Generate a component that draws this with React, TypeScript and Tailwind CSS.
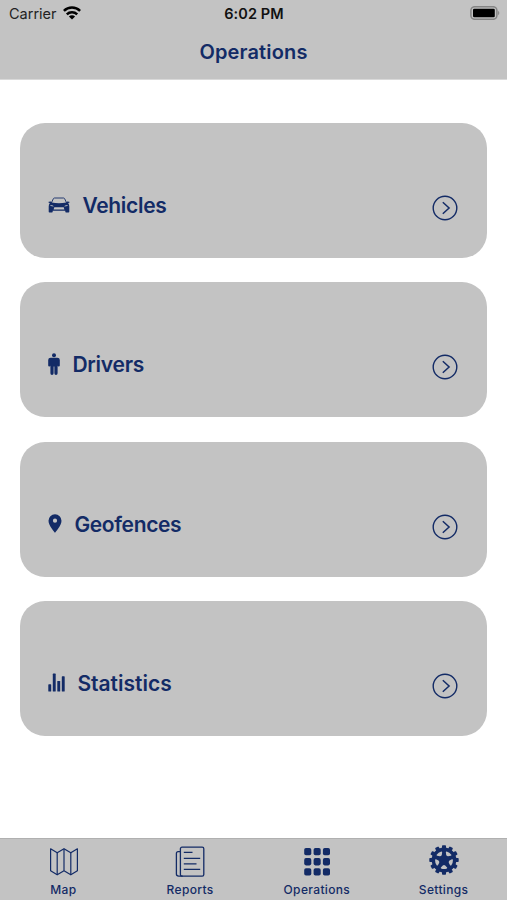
import React from 'react';

interface IconProps {
  className?: string;
}

const WifiIcon: React.FC<IconProps> = ({ className }) => (
  <svg className={className} viewBox="0 0 18 14" fill="none" stroke="currentColor" strokeWidth="2.5">
    <path d="M0.9 4.9a11.6 11.6 0 0 1 16.2 0" />
    <path d="M3.8 8.4a7.4 7.4 0 0 1 10.4 0" />
    <path d="M9 13.6 5.9 10.5a4.4 4.4 0 0 1 6.2 0z" fill="currentColor" stroke="none" />
  </svg>
);

const BatteryIcon: React.FC<IconProps> = ({ className }) => (
  <svg className={className} viewBox="0 0 30 14">
    <rect x="0.9" y="0.7" width="26" height="12.6" rx="3.8" fill="none" stroke="#858585" strokeWidth="1.5" />
    <rect x="3" y="2.7" width="21.8" height="8.6" rx="1.3" fill="#000" />
    <path d="M28.1 4.8a2.6 2.6 0 0 1 0 4.4z" fill="#858585" />
  </svg>
);

const CarIcon: React.FC<IconProps> = ({ className }) => (
  <svg className={className} viewBox="0 0 22 16">
    <path d="M3.2 6.4 5.3 1.8Q5.6 1.1 6.4 1h9.2q0.8 0.1 1.1 0.8l2.1 4.6" fill="none" stroke="currentColor" strokeWidth="0.9" />
    <path
      fillRule="evenodd"
      fill="currentColor"
      d="M0.6 4.7 3 4.4l0.6 1.1q7.4 1.3 14.8 0L19 4.4l2.4 0.3v1.1l-1.3 0.3q1.2 1.2 1.2 3.4v5.2q0 0.8-0.8 0.8h-2.4q-0.8 0-0.8-0.8v-0.9H4.7v0.9q0 0.8-0.8 0.8H1.5q-0.8 0-0.8-0.8V9.5q0-2.2 1.2-3.4L0.6 5.8zM2.3 7.9l0.4 1 2.9 0.6q0.2-0.7-0.8-1zM19.7 7.9l-0.4 1-2.9 0.6q-0.2-0.7 0.8-1zM6.3 10.3h9.4l0.7 2.2H5.6z"
    />
  </svg>
);

const PersonIcon: React.FC<IconProps> = ({ className }) => (
  <svg className={className} viewBox="0 0 12 22" fill="currentColor">
    <circle cx="6" cy="2.2" r="2" />
    <path d="M2.7 4.7h6.6Q11.8 4.7 11.8 7v5.4a1 1 0 0 1-2.2 0v7.9a1.5 1.5 0 0 1-3.2 0V13.4H5.6v6.9a1.5 1.5 0 0 1-3.2 0v-7.9a1 1 0 0 1-2.2 0V7Q0.2 4.7 2.7 4.7z" />
  </svg>
);

const PinIcon: React.FC<IconProps> = ({ className }) => (
  <svg className={className} viewBox="0 0 14 19" fill="currentColor">
    <path fillRule="evenodd" d="M7 0.2a6.5 6.5 0 0 1 6.5 6.6C13.5 11.6 7 18.8 7 18.8S0.5 11.6 0.5 6.8A6.5 6.5 0 0 1 7 0.2zM7 4.6a2.1 2.1 0 1 0 0 4.2 2.1 2.1 0 0 0 0-4.2z" />
  </svg>
);

const BarsIcon: React.FC<IconProps> = ({ className }) => (
  <svg className={className} viewBox="0 0 17 19" fill="currentColor">
    <rect x="0.3" y="11.3" width="2.9" height="7.2" rx="0.6" />
    <rect x="4.8" y="0.6" width="2.9" height="17.9" rx="0.6" />
    <rect x="9.3" y="7.9" width="2.9" height="10.6" rx="0.6" />
    <rect x="13.8" y="3.3" width="2.9" height="15.2" rx="0.6" />
  </svg>
);

const ChevronCircleIcon: React.FC<IconProps> = ({ className }) => (
  <svg className={className} viewBox="0 0 26 26" fill="none" stroke="currentColor" strokeWidth="1.4">
    <circle cx="13" cy="13" r="11.8" />
    <path d="m10.8 7.2 6.3 5.8-6.3 5.8" strokeWidth="1.5" />
  </svg>
);

const MapIcon: React.FC<IconProps> = ({ className }) => (
  <svg className={className} viewBox="0 0 30 30" fill="none" stroke="currentColor" strokeWidth="1.2" strokeLinejoin="round">
    <path d="m1.6 1.8 6.6 4 6.8-4 6.8 4 6.6-4v22l-6.6 4-6.8-4-6.8 4-6.6-4z" />
    <path d="M8.2 5.8v22M15 1.8v22M21.8 5.8v22" />
  </svg>
);

const ReportsIcon: React.FC<IconProps> = ({ className }) => (
  <svg className={className} viewBox="0 0 30 32" fill="none" stroke="currentColor" strokeWidth="1.3">
    <rect x="5.4" y="1.2" width="23.4" height="29" rx="1.6" />
    <path d="M5.4 5.7H3.1q-1.7 0-1.7 1.8v20.6q0 2.1 2.3 2.1h4" />
    <path d="M8.8 6.3h8.7M8.8 12.3h16.4M8.8 17.8h12.7M8.8 23.4h16.4" />
  </svg>
);

const GridIcon: React.FC<IconProps> = ({ className }) => (
  <svg className={className} viewBox="0 0 28 30" fill="currentColor">
    {[0.9, 11.1, 21.2].map(y =>
      [1.2, 10.6, 19.9].map(x => <rect key={`${x}-${y}`} x={x} y={y} width="7.1" height="7.3" rx="1.8" />)
    )}
  </svg>
);

const GearIcon: React.FC<IconProps> = ({ className }) => (
  <svg className={className} viewBox="-15 -15 30 30">
    <circle r="12.4" fill="currentColor" />
    {[0, 30, 60, 90, 120, 150, 180, 210, 240, 270, 300, 330].map(angle => (
      <rect key={angle} x="-2" y="-14.7" width="4" height="4" rx="0.8" fill="currentColor" transform={`rotate(${angle})`} />
    ))}
    {[36, 108, 180, 252, 324].map(angle => (
      <path key={angle} d="M-2.9-8.5q2.9-1.1 5.8 0q0.6 0.5 0.2 1.1L1.2-5.4q-1.2 0.7-2.4 0L-3.1-7.4q-0.4-0.6 0.2-1.1z" fill="#c3c3c3" transform={`rotate(${angle})`} />
    ))}
  </svg>
);

const StatusBar: React.FC = () => (
  <div className="grid h-7 grid-cols-3 items-center pl-[8px] pr-[7px] text-black">
    <div className="flex items-center gap-[6px] pl-px text-[14.5px] leading-7 text-[#222]">
      <span>Carrier</span>
      <WifiIcon className="mb-[2px] h-[14px] w-[18px] text-black" />
    </div>
    <span className="text-center text-[14.5px] font-semibold tracking-[0.1px] text-[#111]">6:02 PM</span>
    <BatteryIcon className="mb-[2px] h-[14px] w-[30px] justify-self-end" />
  </div>
);

const OperationCard: React.FC<{ label: string; icon: React.ReactNode; labelClass: string }> = ({ label, icon, labelClass }) => (
  <button className="flex h-[135px] w-full items-center rounded-[25px] bg-[#c3c3c3] pl-7 pr-[29px] pt-[31px] text-left">
    {icon}
    <span className={`flex-1 text-[21px] font-semibold leading-7 ${labelClass}`}>{label}</span>
    <ChevronCircleIcon className="mt-[4px] h-[26px] w-[26px]" />
  </button>
);

const TabItem: React.FC<{ label: string; icon: React.ReactNode }> = ({ label, icon }) => (
  <button className="flex flex-col items-center pt-[7px]">
    <div className="flex h-8 items-center justify-center">{icon}</div>
    <span className="mt-[4px] text-[12px] font-medium leading-4 tracking-[0.35px]">{label}</span>
  </button>
);

export default function App() {
  return (
    <div className="flex h-[900px] w-full flex-col overflow-hidden bg-white font-['Inter','Liberation_Sans',sans-serif] text-[#132b66]">
      <header className="h-[80px] border-b border-[#d9d9d9] bg-[#c3c3c3]">
        <StatusBar />
        <h1 className="mt-[10px] text-center text-[20px] font-semibold leading-7 tracking-[0.15px]">Operations</h1>
      </header>

      <main className="flex flex-1 flex-col gap-[24.3px] pl-[20.4px] pr-[19.6px] pt-[43px]">
        <OperationCard label="Vehicles" labelClass="ml-[12px] tracking-[-0.3px]" icon={<CarIcon className="mb-[3px] h-4 w-[22px]" />} />
        <OperationCard label="Drivers" labelClass="ml-[12px] tracking-[-0.25px]" icon={<PersonIcon className="mb-[3px] h-[22px] w-[12px]" />} />
        <OperationCard label="Geofences" labelClass="ml-[12px] tracking-[-0.35px]" icon={<PinIcon className="mb-[3px] h-[19px] w-[14px]" />} />
        <OperationCard label="Statistics" labelClass="ml-[12px]" icon={<BarsIcon className="mb-[3px] h-[19px] w-[17px]" />} />
      </main>

      <nav className="grid h-[62px] grid-cols-4 border-t border-[#b0b0b0] bg-[#c3c3c3]">
        <TabItem label="Map" icon={<MapIcon className="ml-px h-[30px] w-[30px]" />} />
        <TabItem label="Reports" icon={<ReportsIcon className="h-8 w-[30px]" />} />
        <TabItem label="Operations" icon={<GridIcon className="h-[30px] w-7" />} />
        <TabItem label="Settings" icon={<GearIcon className="mb-[4px] h-[30px] w-[30px]" />} />
      </nav>
    </div>
  );
}
